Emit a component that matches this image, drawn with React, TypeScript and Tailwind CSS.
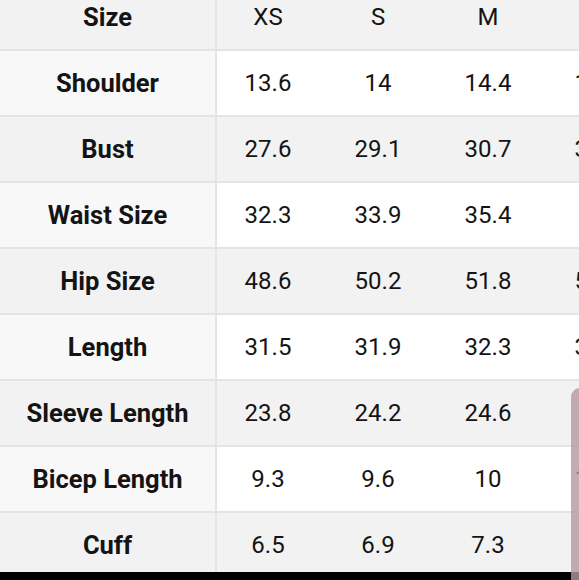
import React from "react";

const rows: { label: string; values: string[] }[] = [
  { label: "Shoulder", values: ["13.6", "14", "14.4", "14.8"] },
  { label: "Bust", values: ["27.6", "29.1", "30.7", "32.3"] },
  { label: "Waist Size", values: ["32.3", "33.9", "35.4", "37"] },
  { label: "Hip Size", values: ["48.6", "50.2", "51.8", "53.4"] },
  { label: "Length", values: ["31.5", "31.9", "32.3", "32.7"] },
  { label: "Sleeve Length", values: ["23.8", "24.2", "24.6", "25"] },
  { label: "Bicep Length", values: ["9.3", "9.6", "10", "10.4"] },
  { label: "Cuff", values: ["6.5", "6.9", "7.3", "7.7"] },
];

export default function App() {
  return (
    <div
      className="relative flex h-[580px] w-[579px] flex-col overflow-hidden bg-white text-[#141414]"
      style={{ fontFamily: "Roboto, 'Noto Sans', sans-serif" }}
    >
      <div className="min-h-0 flex-1 overflow-hidden">
        <div className="-mt-[15px] w-[657px]">
          {/* header */}
          <div className="grid h-[66px] grid-cols-[217px_110px_110px_110px_110px] border-b-2 border-[#e4e4e4] bg-[#f2f2f2] text-[24px]">
            <div className="flex items-center justify-center border-r-2 border-[#e4e4e4] text-[25.5px] font-bold">Size</div>
            {["XS", "S", "M", "L"].map((s) => (
              <div key={s} className="flex items-center justify-center pr-[8px]">
                {s}
              </div>
            ))}
          </div>
          {rows.map((r, i) => {
            const gray = i % 2 === 1;
            return (
              <div
                key={r.label}
                className={
                  "grid h-[66px] grid-cols-[217px_110px_110px_110px_110px] border-b-2 border-[#e4e4e4] text-[24px] " +
                  (gray ? "bg-[#f2f2f2]" : "bg-white")
                }
              >
                <div
                  className={
                    "flex items-center justify-center border-r-2 border-[#e4e4e4] text-[25.5px] font-bold " +
                    (gray ? "bg-[#f2f2f2]" : "bg-[#f8f8f8]")
                  }
                >
                  {r.label}
                </div>
                {r.values.map((v, j) => (
                  <div key={j} className="flex items-center justify-center pr-[8px]">
                    {v}
                  </div>
                ))}
              </div>
            );
          })}
        </div>
      </div>
      <div className="h-[8px] shrink-0 bg-black" />
      <div className="absolute bottom-0 left-[571px] top-[388px] w-[20px] rounded-tl-[9px] bg-[#b6979f]/80" />
    </div>
  );
}
